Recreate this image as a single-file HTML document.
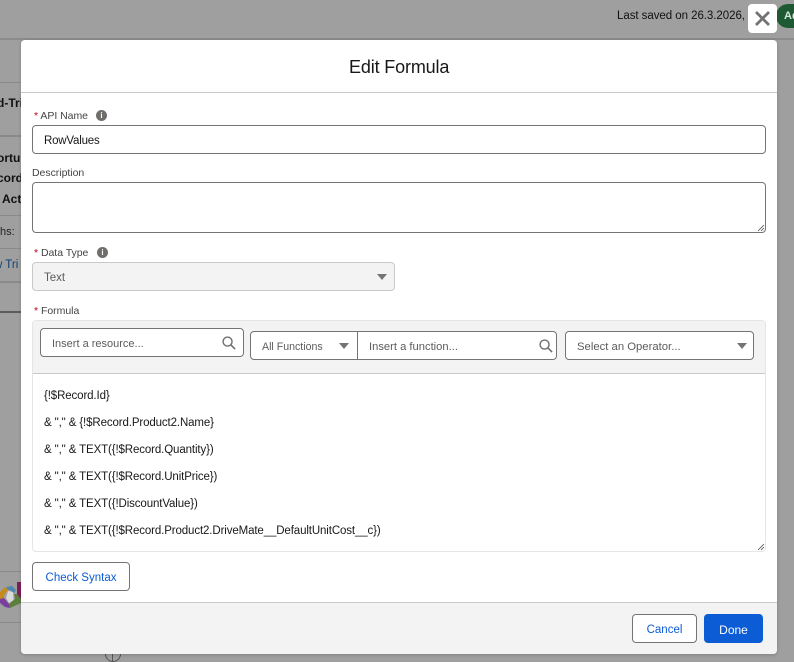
<!DOCTYPE html>
<html><head><meta charset="utf-8">
<style>
html,body{margin:0;padding:0;width:794px;height:662px;overflow:hidden;background:#9f9f9f;font-family:"Liberation Sans",sans-serif;color:#181818}
div,span{position:absolute;box-sizing:border-box}
.t{white-space:nowrap;font-size:12px;line-height:16px}
.lb{color:#444;font-size:10.5px;letter-spacing:-.03px}
.box{border:1px solid #747474;border-radius:4px;background:#fff}
.r{color:#ba0517}
.i{width:11px;height:11px;border-radius:50%;background:#706e6b;color:#fff;font-size:8px;line-height:11px;text-align:center;font-weight:bold}
.code{font-size:11.5px;left:44px;letter-spacing:-.12px}
svg{position:absolute}
</style></head><body>
<div style="left:0;top:38px;width:794px;height:2px;background:#8b8b8b"></div>
<div style="left:0;top:82px;width:21px;height:1px;background:#8a8a8a"></div>
<div style="left:0;top:135px;width:21px;height:2px;background:#8a8a8a"></div>
<div style="left:0;top:215px;width:21px;height:1px;background:#8a8a8a"></div>
<div style="left:0;top:248px;width:21px;height:1px;background:#8a8a8a"></div>
<div style="left:0;top:281px;width:21px;height:2px;background:#8a8a8a"></div>
<div style="left:0;top:311px;width:21px;height:2px;background:#5c5c5c"></div>
<div style="left:0;top:571px;width:21px;height:1px;background:#8a8a8a"></div>
<div style="left:0;top:622px;width:21px;height:1px;background:#8a8a8a"></div>
<div style="left:0;top:40px;width:21px;height:575px;overflow:hidden">
<div class="t" style="left:-3px;top:55px;font-weight:bold;color:#111;font-size:12px;">d-Tri</div>
<div class="t" style="left:-3px;top:110px;font-weight:bold;color:#111;font-size:12px;">ortu</div>
<div class="t" style="left:-3px;top:130px;font-weight:bold;color:#111;font-size:12px;">cord</div>
<div class="t" style="left:2px;top:151px;font-weight:bold;color:#111;font-size:12px;">Acti</div>
<div class="t" style="left:-3px;top:184px;color:#222;font-size:11px;">ths:</div>
<div class="t" style="left:-6px;top:217px;color:#0b3f73;font-size:11.5px;">w Tri</div>
</div>
<svg style="left:0;top:582px" width="21" height="30" viewBox="0 0 21 30"><path d="M17 0H21V20H17Z" fill="#7d1f5c"/><path d="M0 10L5 5L8 8L4 13L4 16L0 17Z" fill="#c98a1c"/><path d="M0 17L4 16L9 22L10 26L5 25L0 21Z" fill="#7a3f9d"/><path d="M6 5L12 4L16 8L14 11L10 8L8 8Z" fill="#4f87ad"/><path d="M10 26L9 22L15 17L14 12L17 12L21 17L21 21Z" fill="#5d7f3c"/><path d="M8 9L13 10L13.500 18L9 21L6 16Z" fill="#eeeeee" opacity=".75"/></svg>
<div style="left:105px;top:646px;width:16px;height:16px;border:1px solid #555;border-radius:50%"></div>
<div style="left:112px;top:654px;width:1px;height:8px;background:#555"></div>
<div class="t" style="left:617px;top:8px;font-size:11.5px;color:#111;width:131px;overflow:hidden;letter-spacing:-.05px">Last saved on 26.3.2026, 1</div>
<div style="left:776px;top:4px;width:34px;height:24px;border-radius:12px;background:#1d5a34"></div>
<div class="t" style="left:784px;top:8px;color:#d8e8d8;font-weight:bold;font-size:11px">Ad</div>
<div style="left:748px;top:4px;width:29px;height:29px;background:#fff;border-radius:4px"></div>
<svg style="left:748px;top:4px" width="29" height="29" viewBox="0 0 29 29"><path d="M8 8L21 21M21 8L8 21" stroke="#747474" stroke-width="2.800" fill="none"/></svg>

<div style="left:21px;top:40px;width:756px;height:614px;background:#fff;border-radius:4px;overflow:hidden;box-shadow:0 1px 3px rgba(0,0,0,.2)">
<div style="left:0;top:52px;width:756px;height:1px;background:#c9c9c9"></div>
<div style="left:0;top:562px;width:756px;height:52px;background:#f3f3f3;border-top:1px solid #c9c9c9"></div>
</div>
<div class="t" style="left:349px;top:56px;font-size:18px;line-height:22px;color:#181818;letter-spacing:-.15px">Edit Formula</div>

<div class="t lb" style="left:34px;top:108px"><span class="r" style="position:static">*</span> API Name</div>
<div class="i" style="left:96px;top:110px">i</div>
<div class="box" style="left:32px;top:125px;width:734px;height:29px"></div>
<div class="t" style="left:44px;top:133px;font-size:11.5px;letter-spacing:-.2px">RowValues</div>
<div class="t lb" style="left:32px;top:165px">Description</div>
<div class="box" style="left:32px;top:182px;width:734px;height:51px"></div>
<svg style="left:756px;top:223px" width="9" height="9" viewBox="0 0 9 9"><path d="M8 2L2 8M8 5L5 8" stroke="#555" stroke-width=".8"/></svg>

<div class="t lb" style="left:34px;top:245px"><span class="r" style="position:static">*</span> Data Type</div>
<div class="i" style="left:97px;top:247px">i</div>
<div style="left:32px;top:262px;width:363px;height:29px;background:#f3f3f3;border:1px solid #c9c9c9;border-radius:4px"></div>
<div class="t" style="left:44px;top:270px;color:#5c5c5c;font-size:11.5px">Text</div>
<svg style="left:377px;top:274px" width="10" height="6" viewBox="0 0 10 6"><path d="M0 0H10L5 6Z" fill="#747474"/></svg>

<div class="t lb" style="left:34px;top:303px"><span class="r" style="position:static">*</span> Formula</div>
<div style="left:32px;top:320px;width:734px;height:232px;background:#fff;border:1px solid #e5e5e5;border-radius:4px"></div>
<div style="left:33px;top:321px;width:732px;height:53px;background:#f3f3f3;border-bottom:1px solid #c9c9c9;border-radius:3px 3px 0 0"></div>

<div class="box" style="left:40px;top:328px;width:204px;height:29px"></div>
<div class="t" style="left:52px;top:336px;font-size:11px;color:#5c5c5c;">Insert a resource...</div>
<svg style="left:221px;top:335px" width="15" height="15" viewBox="0 0 16 16"><circle cx="7" cy="7" r="4.800" fill="none" stroke="#706e6b" stroke-width="1.500"/><path d="M10.500 10.500L15 15" stroke="#706e6b" stroke-width="1.700"/></svg>

<div class="box" style="left:250px;top:331px;width:108px;height:29px;border-radius:4px 0 0 4px"></div>
<div class="t" style="left:262px;top:339px;font-size:10.600px;color:#5c5c5c">All Functions</div>
<svg style="left:339px;top:343px" width="10" height="6" viewBox="0 0 10 6"><path d="M0 0H10L5 6Z" fill="#747474"/></svg>
<div class="box" style="left:357px;top:331px;width:200px;height:29px;border-radius:0 4px 4px 0"></div>
<div class="t" style="left:369px;top:339px;font-size:11.200px;color:#5c5c5c">Insert a function...</div>
<svg style="left:538px;top:338px" width="15" height="15" viewBox="0 0 16 16"><circle cx="7" cy="7" r="4.800" fill="none" stroke="#706e6b" stroke-width="1.500"/><path d="M10.500 10.500L15 15" stroke="#706e6b" stroke-width="1.700"/></svg>

<div class="box" style="left:565px;top:331px;width:189px;height:29px"></div>
<div class="t" style="left:577px;top:339px;font-size:11.300px;color:#5c5c5c">Select an Operator...</div>
<svg style="left:737px;top:343px" width="10" height="6" viewBox="0 0 10 6"><path d="M0 0H10L5 6Z" fill="#747474"/></svg>

<div class="t code" style="top:388px">{!$Record.Id}</div>
<div class="t code" style="top:415px">&amp; "," &amp; {!$Record.Product2.Name}</div>
<div class="t code" style="top:442px">&amp; "," &amp; TEXT({!$Record.Quantity})</div>
<div class="t code" style="top:469px">&amp; "," &amp; TEXT({!$Record.UnitPrice})</div>
<div class="t code" style="top:496px">&amp; "," &amp; TEXT({!DiscountValue})</div>
<div class="t code" style="top:523px">&amp; "," &amp; TEXT({!$Record.Product2.DriveMate__DefaultUnitCost__c})</div>
<svg style="left:756px;top:542px" width="9" height="9" viewBox="0 0 9 9"><path d="M8 2L2 8M8 5L5 8" stroke="#555" stroke-width=".8"/></svg>

<div class="box" style="left:32px;top:562px;width:98px;height:29px"></div>
<div class="t" style="left:32px;top:570px;width:98px;text-align:center;color:#0b5cd5;font-size:11.5px">Check Syntax</div>
<div class="box" style="left:632px;top:614px;width:65px;height:29px"></div>
<div class="t" style="left:632px;top:622px;width:65px;text-align:center;color:#0b5cd5;font-size:11.5px">Cancel</div>
<div style="left:704px;top:614px;width:59px;height:29px;background:#0b5cd5;border-radius:4px"></div>
<div class="t" style="left:704px;top:622px;width:59px;text-align:center;color:#fff;font-size:12px">Done</div>
</body></html>
